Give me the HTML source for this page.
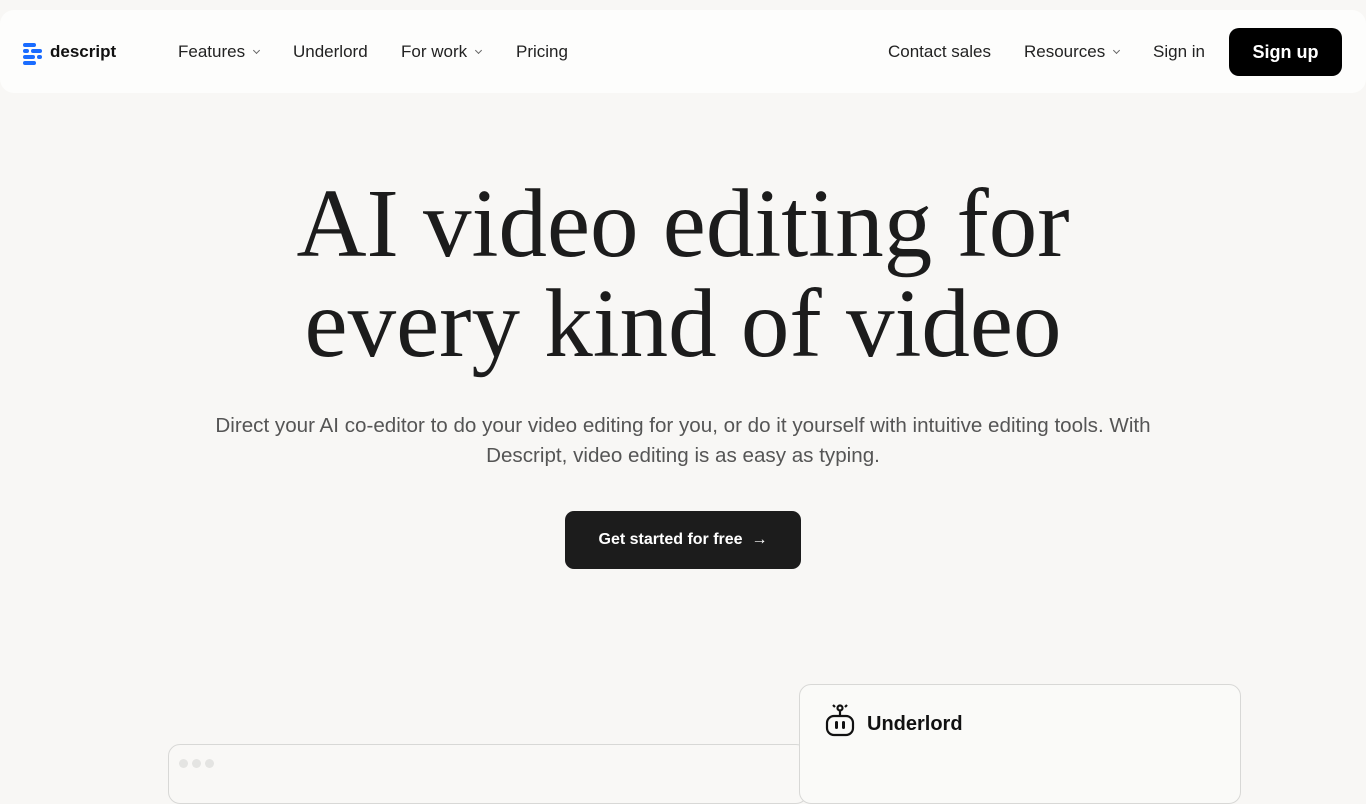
<!DOCTYPE html>
<html><head><meta charset="utf-8"><style>
*{margin:0;padding:0;box-sizing:border-box}
body{width:1366px;height:768px;overflow:hidden;background:#f8f7f5;font-family:"Liberation Sans",sans-serif;color:#1a1a1a;position:relative}
.nav{position:absolute;left:0;top:10px;width:1366px;height:83px;background:#fdfdfc;border-radius:14px}
.nav a{position:absolute;top:42px;transform:translateY(-50%);font-size:17px;color:#222;text-decoration:none;white-space:nowrap}
.chev{display:inline-block;width:5px;height:5px;border-right:1.2px solid #666;border-bottom:1.2px solid #666;transform:rotate(45deg);margin-left:9px;position:relative;top:-4px}
.logo{position:absolute;left:23px;top:33px}
.signup{position:absolute;left:1229px;top:18px;width:113px;height:48px;background:#000;color:#fff;border-radius:10px;font-size:18px;font-weight:bold;display:flex;align-items:center;justify-content:center}
h1{position:absolute;left:0;width:1366px;top:174px;text-align:center;font-family:"Liberation Serif",serif;font-weight:normal;font-size:97px;line-height:100px;letter-spacing:0;color:#1c1c1c}
.sub{position:absolute;left:180px;width:1006px;top:411px;text-align:center;font-size:20.6px;line-height:30px;color:#555}
.cta{position:absolute;left:565px;top:511px;width:236px;height:58px;background:#1c1c1c;color:#fff;border-radius:9px;font-size:16px;font-weight:bold;display:flex;align-items:center;justify-content:center}
.card{position:absolute;background:#f9f8f6;border:1.5px solid #d8d8d6;border-radius:12px}
</style></head><body>
<div class="nav">
<svg class="logo" width="20" height="22" viewBox="0 0 20 22"><g fill="#1a6cff"><rect x="0" y="0" width="13" height="4" rx="2"/><rect x="0" y="6" width="6" height="4" rx="2"/><rect x="8" y="6" width="11" height="4" rx="2"/><rect x="0" y="12" width="12" height="4" rx="2"/><rect x="14" y="12" width="5" height="4" rx="2"/><rect x="0" y="18" width="13" height="4" rx="2"/></g></svg>
<a style="left:50px;font-weight:bold;font-size:17px;color:#111">descript</a>
<a style="left:178px">Features<span class="chev"></span></a>
<a style="left:293px">Underlord</a>
<a style="left:401px">For work<span class="chev"></span></a>
<a style="left:516px">Pricing</a>
<a style="left:888px">Contact sales</a>
<a style="left:1024px">Resources<span class="chev"></span></a>
<a style="left:1153px">Sign in</a>
<div class="signup">Sign up</div>
</div>
<h1>AI video editing for<br>every kind of video</h1>
<div class="sub">Direct your AI co-editor to do your video editing for you, or do it yourself with intuitive editing tools. With Descript, video editing is as easy as typing.</div>
<div class="cta">Get started for free&nbsp;&nbsp;→</div>
<div class="card" style="left:168px;top:744px;width:640px;height:60px"><div style="position:absolute;left:10px;top:14px;display:flex;gap:4px"><i style="width:9px;height:9px;border-radius:50%;background:#e4e4e2"></i><i style="width:9px;height:9px;border-radius:50%;background:#e4e4e2"></i><i style="width:9px;height:9px;border-radius:50%;background:#e4e4e2"></i></div></div>
<div class="card" style="left:799px;top:684px;width:442px;height:120px;background:#fafaf8">
<svg style="position:absolute;left:23px;top:17px" width="34" height="36" viewBox="0 0 34 36"><g stroke="#111" stroke-width="2.2" fill="none"><circle cx="17" cy="6" r="2.5"/><line x1="17" y1="9" x2="17" y2="14"/><line x1="10" y1="3" x2="12" y2="5"/><line x1="24" y1="3" x2="22" y2="5"/><rect x="4" y="14" width="26" height="19" rx="7"/></g><rect x="12" y="19" width="3" height="8" rx="1.5" fill="#111"/><rect x="19" y="19" width="3" height="8" rx="1.5" fill="#111"/></svg>
<div style="position:absolute;left:67px;top:28px;font-size:20px;font-weight:bold;color:#111">Underlord</div>
</div>
</body></html>
